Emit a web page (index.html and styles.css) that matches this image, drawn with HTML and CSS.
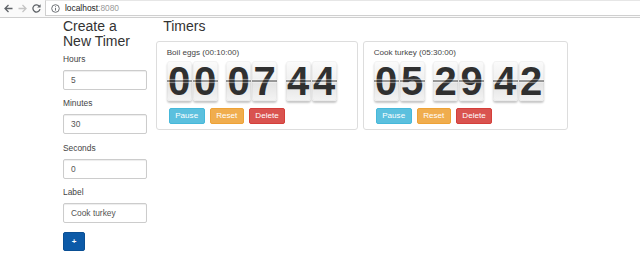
FILE: index.html
```html
<!DOCTYPE html>
<html lang="en">
<head>
<meta charset="utf-8">
<title>Timers</title>
<link rel="stylesheet" href="styles.css">
</head>
<body>
<div class="chrome">
  <div class="nav">
    <svg class="nav-icon" width="11" height="11" viewBox="0 0 11 11"><path d="M9.5 5.5H2.2M5.5 2 2 5.5 5.5 9" fill="none" stroke="#5f6368" stroke-width="1.3"/></svg>
    <svg class="nav-icon" width="11" height="11" viewBox="0 0 11 11"><path d="M1.5 5.5H8.8M5.5 2 9 5.5 5.5 9" fill="none" stroke="#c4c4c4" stroke-width="1.3"/></svg>
    <svg class="nav-icon" width="11" height="11" viewBox="0 0 11 11"><path d="M8.6 3.6A3.6 3.6 0 1 0 9 6.2" fill="none" stroke="#5f6368" stroke-width="1.3"/><path d="M9.6 1.2v3.4H6.2z" fill="#5f6368"/></svg>
  </div>
  <div class="omnibox">
    <svg class="info" width="9" height="9" viewBox="0 0 9 9"><circle cx="4.5" cy="4.5" r="3.8" fill="none" stroke="#5f6368" stroke-width="0.9"/><path d="M4.5 4v2.6M4.5 2.3v0.9" stroke="#5f6368" stroke-width="0.9"/></svg>
    <span class="host">localhost</span><span class="port">:8080</span>
  </div>
</div>

<main class="page">
  <aside class="create">
    <h2 class="heading">Create a New Timer</h2>
    <div class="group">
      <label class="label">Hours</label>
      <div class="input">5</div>
    </div>
    <div class="group">
      <label class="label">Minutes</label>
      <div class="input">30</div>
    </div>
    <div class="group">
      <label class="label">Seconds</label>
      <div class="input">0</div>
    </div>
    <div class="group">
      <label class="label">Label</label>
      <div class="input">Cook turkey</div>
    </div>
    <button class="add">+</button>
  </aside>

  <section class="timers">
    <h2 class="heading timers-title">Timers</h2>
    <div class="cards">
      <article class="card">
        <div class="card-label">Boil eggs (00:10:00)</div>
        <div class="clock">
          <div class="pair"><span class="tile">0</span><span class="tile">0</span></div>
          <div class="pair"><span class="tile">0</span><span class="tile">7</span></div>
          <div class="pair"><span class="tile">4</span><span class="tile">4</span></div>
        </div>
        <div class="actions">
          <button class="btn btn-pause">Pause</button>
          <button class="btn btn-reset">Reset</button>
          <button class="btn btn-delete">Delete</button>
        </div>
      </article>
      <article class="card">
        <div class="card-label">Cook turkey (05:30:00)</div>
        <div class="clock">
          <div class="pair"><span class="tile">0</span><span class="tile">5</span></div>
          <div class="pair"><span class="tile">2</span><span class="tile">9</span></div>
          <div class="pair"><span class="tile">4</span><span class="tile">2</span></div>
        </div>
        <div class="actions">
          <button class="btn btn-pause">Pause</button>
          <button class="btn btn-reset">Reset</button>
          <button class="btn btn-delete">Delete</button>
        </div>
      </article>
    </div>
  </section>
</main>
</body>
</html>
```

FILE: styles.css
```css
* { box-sizing: border-box; }

html, body {
  margin: 0;
  padding: 0;
  background: #fff;
  font-family: "Liberation Sans", Arial, sans-serif;
  color: #333;
  font-size: 8.1px;
}

/* browser chrome */
.chrome {
  height: 18px;
  display: flex;
  align-items: flex-start;
  background: #fafafa;
  border-bottom: 1px solid #cfcfcf;
}
.nav {
  display: flex;
  gap: 3px;
  padding: 3px 0 0 3px;
  width: 45px;
}
.omnibox {
  flex: 1;
  height: 16px;
  background: #fff;
  border: 1px solid #cfcfcf;
  border-right: none;
  border-top-color: #e6e6e6;
  display: flex;
  align-items: center;
  padding-left: 5px;
  font-size: 8.4px;
}
.info { margin-right: 5px; }
.host { color: #222; }
.port { color: #9a9a9a; }

/* page */
.page {
  display: flex;
  padding-left: 63px;
  gap: 8.7px;
}
.heading {
  margin: 1px 0 0;
  font-size: 14px;
  font-weight: normal;
  line-height: 15.4px;
  color: #333;
}
.create {
  width: 84px;
}
.create .heading { margin-bottom: 4px; }
.group { margin-bottom: 8.5px; }
.label {
  display: block;
  line-height: 11px;
  height: 11px;
  margin-bottom: 5px;
  color: #444;
  font-size: 8.4px;
}
.input {
  height: 20px;
  border: 1px solid #ccc;
  border-radius: 2px;
  box-shadow: inset 0 1px 1px rgba(0,0,0,.075);
  padding: 0 7px;
  line-height: 18px;
  color: #555;
  font-size: 8.4px;
}
.add {
  display: block;
  width: 22px;
  height: 19px;
  padding: 0;
  border: 1px solid #0a4f94;
  border-radius: 2px;
  background: #0c5aa8;
  color: #fff;
  font: bold 8px "Liberation Sans", Arial, sans-serif;
}

.timers { width: 412px; }
.timers-title { padding-left: 7.5px; margin-bottom: 6.4px; }
.cards {
  display: grid;
  grid-template-columns: 202px 205px;
  gap: 5px;
}
.card {
  border: 1px solid #ddd;
  border-radius: 3px;
  padding: 5.5px 10px 5.5px 10px;
}
.card-label {
  line-height: 11px;
  color: #444;
  margin-bottom: 3.2px;
}
.clock {
  display: flex;
  gap: 8.5px;
}
.pair {
  display: flex;
  gap: 1px;
}
.tile {
  position: relative;
  display: block;
  width: 25px;
  height: 40px;
  border-radius: 3px;
  background: linear-gradient(#fbfbfb 0%, #f0f0f0 48%, #e2e2e2 52%, #f4f4f4 100%);
  box-shadow: 0 2px 2px rgba(0,0,0,.22), inset 0 0 0 1px rgba(0,0,0,.03);
  font: bold 40px/40px "Liberation Sans", Arial, sans-serif;
  color: #303030;
  text-align: center;
}
.tile::after {
  content: "";
  position: absolute;
  left: 0;
  right: 0;
  top: 19px;
  height: 2px;
  background: rgba(70,70,70,.5);
  box-shadow: 0 -1px 1px rgba(255,255,255,.45), 0 1px 1px rgba(255,255,255,.45);
}
.actions {
  display: flex;
  gap: 5px;
  margin-top: 6.6px;
  padding-left: 2px;
}
.btn {
  height: 15.7px;
  padding: 0 5.5px;
  border: 1px solid transparent;
  border-radius: 2px;
  color: #fff;
  font: 8.1px "Liberation Sans", Arial, sans-serif;
}
.btn-pause { background: #5bc0de; border-color: #46b8da; }
.btn-reset { background: #f0ad4e; border-color: #eea236; }
.btn-delete { background: #d9534f; border-color: #d43f3a; }
```
